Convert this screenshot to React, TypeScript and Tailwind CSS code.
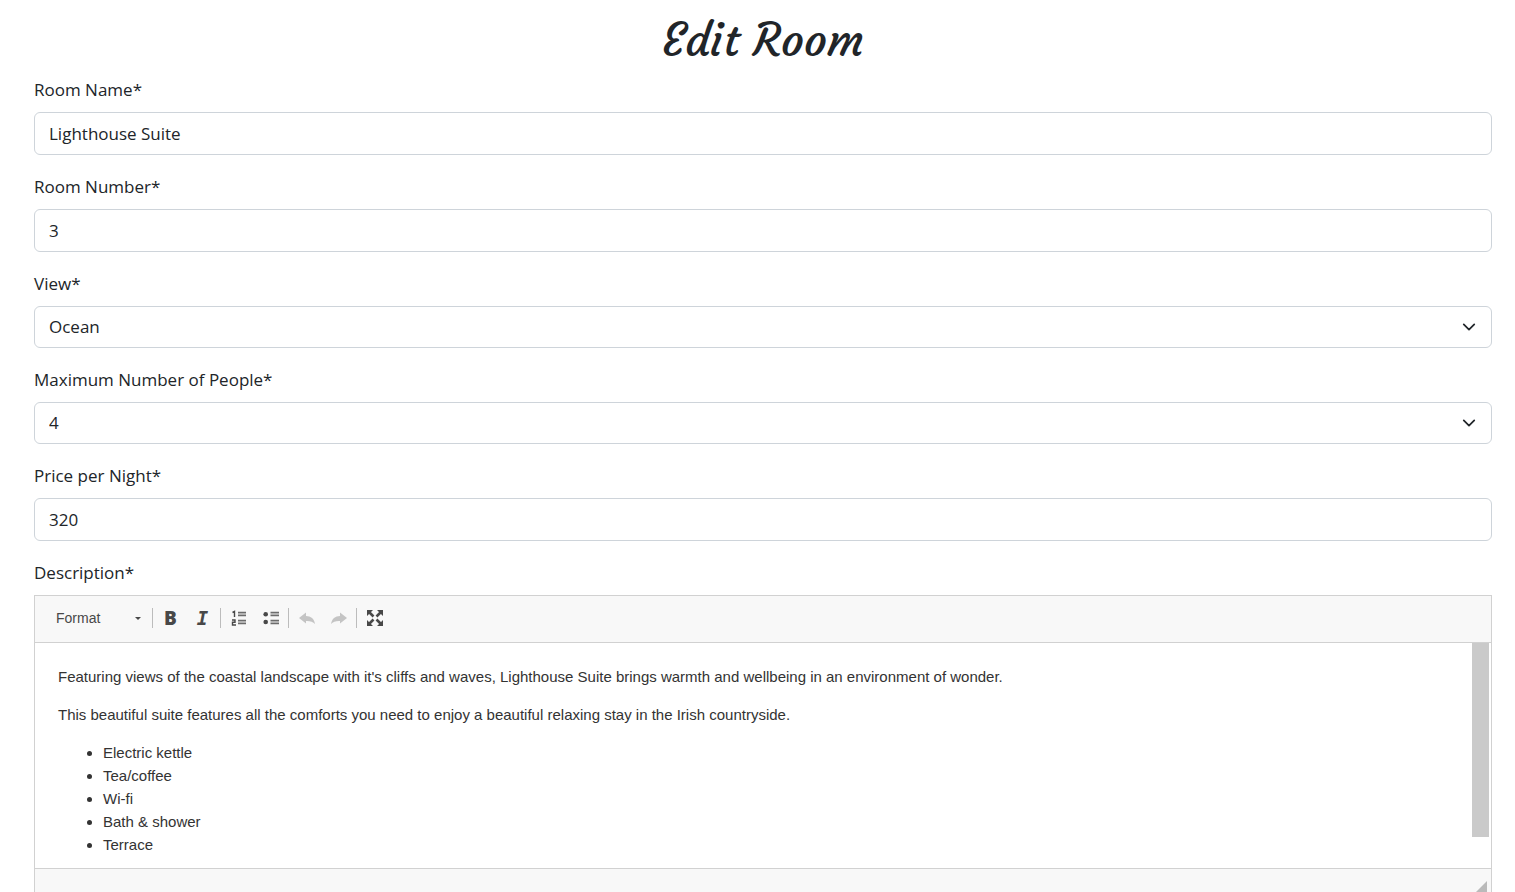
import React from 'react';

const control =
  'block w-full appearance-none rounded-md border border-[#ced4da] bg-white pl-[14px] pr-10 text-[17px] text-[#212529] outline-none focus:border-[#86b7fe]';

function Field({ id, label, children }: { id: string; label: string; children: React.ReactNode }) {
  return (
    <div className="mb-[18px]">
      <label htmlFor={id} className="mb-2 block leading-7">
        {label}
      </label>
      {children}
    </div>
  );
}

function TextField({ id, label, value }: { id: string; label: string; value: string }) {
  return (
    <Field id={id} label={label}>
      <input id={id} type="text" defaultValue={value} className={`${control} h-[43px]`} />
    </Field>
  );
}

function SelectField({ id, label, options, value }: { id: string; label: string; options: string[]; value: string }) {
  return (
    <Field id={id} label={label}>
      <div className="relative">
        <select id={id} defaultValue={value} className={`${control} h-[42px]`}>
          {options.map((o) => (
            <option key={o}>{o}</option>
          ))}
        </select>
        <svg
          viewBox="0 0 16 16"
          className="pointer-events-none absolute inset-y-0 right-4 my-auto h-[14px] w-[14px]"
          fill="none"
          stroke="#212529"
          strokeWidth="2"
          strokeLinecap="round"
          strokeLinejoin="round"
        >
          <path d="M2 5l6 6 6-6" />
        </svg>
      </div>
    </Field>
  );
}

function ToolButton({ label, disabled, children }: { label: string; disabled?: boolean; children: React.ReactNode }) {
  return (
    <button
      type="button"
      aria-label={label}
      disabled={disabled}
      className="flex h-7 w-[31px] items-center justify-center text-[#484848] disabled:text-[#c4c4c4]"
    >
      {children}
    </button>
  );
}

function Separator() {
  return <span className="mx-[2px] h-5 w-px bg-[#bcbcbc]" />;
}

function Editor() {
  return (
    <div className="border border-[#d1d1d1]">
      <div className="flex h-[47px] items-center border-b border-[#d1d1d1] bg-[#f8f8f8] pb-[2px] pl-[21px] font-['Liberation_Sans',Arial,sans-serif]">
        <button type="button" className="mr-[9px] flex w-[85px] items-center justify-between text-[14px] text-[#484848]">
          Format
          <svg viewBox="0 0 6 3" className="h-[3px] w-[6px]" fill="#484848">
            <path d="M0 0h6L3 3z" />
          </svg>
        </button>
        <Separator />
        <div className="flex gap-px">
          <ToolButton label="Bold">
            <span className="font-['Open_Sans',sans-serif] text-[19px] font-extrabold leading-none">B</span>
          </ToolButton>
          <ToolButton label="Italic">
            <span className="font-['DejaVu_Sans_Mono',monospace] text-[19px] font-bold italic leading-none">I</span>
          </ToolButton>
        </div>
        <Separator />
        <div className="flex gap-px">
          <ToolButton label="Insert/Remove Numbered List">
            <svg viewBox="0 0 16 16" className="h-4 w-4" fill="none" stroke="currentColor">
              <path d="M1.5 2.5L3.5 1.5V7" strokeWidth="1.4" />
              <path d="M1 10h3v2.2H1.5V15H5" strokeWidth="1.4" />
              <path d="M7 2.5h8M7 5.5h8M7 10.5h8M7 13.5h8" strokeWidth="1.3" opacity=".8" />
              <path d="M7 4h8M7 12h8" strokeWidth="1.6" opacity=".3" />
            </svg>
          </ToolButton>
          <ToolButton label="Insert/Remove Bulleted List">
            <svg viewBox="0 0 16 16" className="h-4 w-4" fill="none" stroke="currentColor">
              <circle cx="2.7" cy="4.2" r="2.3" fill="currentColor" stroke="none" />
              <circle cx="2.7" cy="12" r="2.3" fill="currentColor" stroke="none" />
              <path d="M7.5 2.5H16M7.5 5.5H16M7.5 10.5H16M7.5 13.5H16" strokeWidth="1.3" opacity=".8" />
              <path d="M7.5 4H16M7.5 12H16" strokeWidth="1.6" opacity=".3" />
            </svg>
          </ToolButton>
        </div>
        <Separator />
        <div className="flex gap-px">
          <ToolButton label="Undo" disabled>
            <svg viewBox="0 0 16 16" className="h-4 w-4" fill="currentColor">
              <path d="M0 8L7 2.5V6c5 .2 8 2.5 9 8-2-2.300-5-3.200-9-3v2.500z" />
            </svg>
          </ToolButton>
          <ToolButton label="Redo" disabled>
            <svg viewBox="0 0 16 16" className="h-4 w-4" fill="currentColor">
              <path d="M16 8L9 2.500V6c-5 .2-8 2.500-9 8 2-2.300 5-3.200 9-3v2.500z" />
            </svg>
          </ToolButton>
        </div>
        <Separator />
        <ToolButton label="Maximize">
          <svg viewBox="0 0 16 16" className="h-4 w-4" fill="currentColor" stroke="currentColor">
            <path d="M0 0h6L0 6zM16 0v6l-6-6zM0 16v-6l6 6zM16 16h-6l6-6z" stroke="none" />
            <path d="M2 2l4.500 4.500M14 2L9.500 6.500M2 14l4.500-4.500M14 14L9.500 9.500" strokeWidth="2.600" />
          </svg>
        </ToolButton>
      </div>

      <div className="flex h-[225px]">
        <div
          contentEditable
          suppressContentEditableWarning
          role="textbox"
          aria-labelledby="description-label"
          className="min-w-0 flex-1 overflow-hidden px-[23px] pt-[22px] font-['Liberation_Sans',Arial,sans-serif] text-[15px] leading-[23px] text-[#333333] outline-none"
        >
          <p className="mb-[15px]">
            Featuring views of the coastal landscape with it's cliffs and waves, Lighthouse Suite brings warmth and
            wellbeing in an environment of wonder.
          </p>
          <p className="mb-[15px]">
            This beautiful suite features all the comforts you need to enjoy a beautiful relaxing stay in the Irish
            countryside.
          </p>
          <ul className="list-disc pl-[45px]">
            <li>Electric kettle</li>
            <li>Tea/coffee</li>
            <li>Wi-fi</li>
            <li>Bath &amp; shower</li>
            <li>Terrace</li>
          </ul>
        </div>
        <div className="mr-[2px] w-[17px]">
          <div className="h-[194px] bg-[#cacaca]" />
        </div>
      </div>

      <div className="flex h-[28px] items-end justify-end border-t border-[#d1d1d1] bg-[#f8f8f8] pb-1 pr-1">
        <svg viewBox="0 0 11 11" className="h-[11px] w-[11px]" fill="#bababa">
          <path d="M11 0v11H0z" />
        </svg>
      </div>
    </div>
  );
}

export default function App() {
  return (
    <main className="bg-white pl-[34px] pr-[23px] pt-[13px] font-['Open_Sans','Noto_Sans',sans-serif] text-[17px] text-[#212529]">
      <h1 className="mb-2 text-center font-['Courgette',cursive] text-[45px] font-medium leading-[55px]">
        Edit Room
      </h1>
      <form>
        <TextField id="room-name" label="Room Name*" value="Lighthouse Suite" />
        <TextField id="room-number" label="Room Number*" value="3" />
        <SelectField id="view" label="View*" options={['Ocean', 'Garden']} value="Ocean" />
        <SelectField id="people" label="Maximum Number of People*" options={['1', '2', '3', '4']} value="4" />
        <TextField id="price" label="Price per Night*" value="320" />
        <div id="description-label" className="mb-2 leading-7">
          Description*
        </div>
        <Editor />
      </form>
    </main>
  );
}
